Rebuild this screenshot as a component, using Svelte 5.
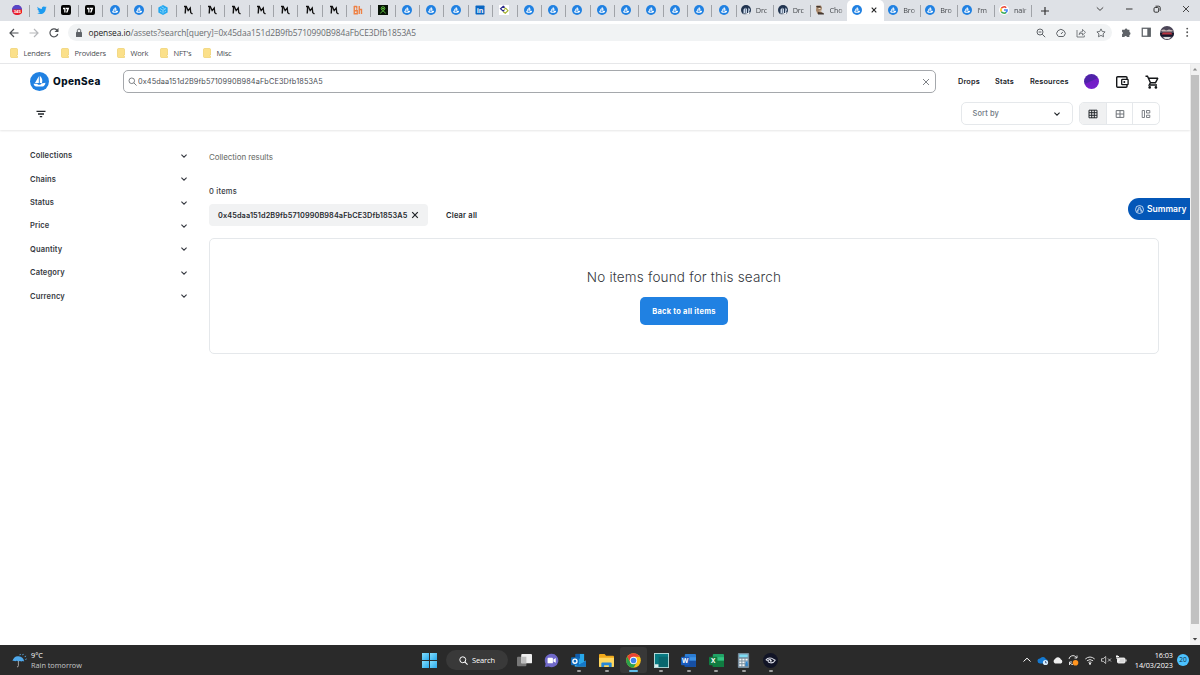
<script>
	let smallTabs = [
		'bus', 'bird', 'tv', 'tv', 'sea', 'sea', 'cube',
		'm', 'm', 'm', 'm', 'm', 'm', 'm', 'bh', 'green',
		'sea', 'sea', 'sea', 'in', 'diamond',
		'sea', 'sea', 'sea', 'sea', 'sea', 'sea', 'sea', 'sea', 'sea'
	];
	let wideTabs = [
		{ icon: 'drop', title: 'Drc' },
		{ icon: 'drop', title: 'Drc' },
		{ icon: 'ape', title: 'Cho' },
		{ icon: 'sea', title: '', active: true },
		{ icon: 'sea', title: 'Bro' },
		{ icon: 'sea', title: 'Bro' },
		{ icon: 'sea', title: "I'm" },
		{ icon: 'google', title: 'nair' }
	];
	let bookmarks = [
		{ name: 'Lenders', width: 51 },
		{ name: 'Providers', width: 56 },
		{ name: 'Work', width: 43 },
		{ name: "NFT's", width: 43 },
		{ name: 'Misc', width: 40 }
	];
	let filters = ['Collections', 'Chains', 'Status', 'Price', 'Quantity', 'Category', 'Currency'];
	let apps = ['tasks', 'chat', 'outlook', 'folder', 'chrome', 'teal', 'word', 'excel', 'calc', 'eye'];
	let address = '0x45daa151d2B9fb5710990B984aFbCE3Dfb1853A5';
	let query = $state(address);
</script>

{#snippet chevron()}
	<svg class="chev" viewBox="0 0 8 8"><path d="M1.4 2.7 4 5.2l2.6-2.5" fill="none" stroke="currentColor" stroke-width="1.1" /></svg>
{/snippet}

{#snippet favicon(name)}
	<svg class="fav" viewBox="0 0 20 20">
		{#if name === 'sea'}
			<circle cx="10" cy="10" r="10" fill="#2081e2" />
			<path d="M9.3 4.5v7H5.2zM10.3 4c2.2 2 3.4 4.600 2.300 7.500h-2.300zM3.800 12.400h4l.6 1h2.500l1-1.200 4.300-.9c0 2-1.500 4-3 4H6.800c-1.700 0-2.800-1.200-3-2.900z" fill="#fff" />
		{:else if name === 'bus'}
			<circle cx="10" cy="10" r="10" fill="#8b3a9c" />
			<path d="M0 10a10 10 0 0 1 20 0z" fill="#5547c8" />
			<path d="M1 9h19v7q-4 4-9 4-8 0-10-7z" fill="#ed1c24" />
			<text x="10.500" y="16.500" text-anchor="middle" font-size="8.500" font-weight="700" fill="#fff">345</text>
		{:else if name === 'bird'}
			<path d="M1 3.500c2.500 2.700 5 4.200 8.700 4.300C9 4 12.800 1.500 16 4l2.700-1-1.300 2.300 2.100-.5-2 2.200C17.500 14 12.500 18 7 18c-2.600 0-4.700-.7-6.500-1.800 2.300.1 4.100-.4 5.600-1.600-1.800-.2-3-1.200-3.500-2.700h1.600C2.200 11.200 1 9.700 1 7.700l1.800.5C1 6.700.4 5 1 3.500z" fill="#1d9bf0" />
		{:else if name === 'tv'}
			<rect width="20" height="20" rx="4" fill="#050505" />
			<path d="M4 5.500h5v9.500H6.500V8.500H4zM10 5.500h6.500L13 15h-3l2.500-6.500H10z" fill="#fff" />
		{:else if name === 'cube'}
			<path d="m10 0 9.300 5v10L10 20 .7 15V5z" fill="#24a7ef" />
			<path d="m4 7 6 3.500L16 7M10 10.500V17M7 3.500l6 3.500M4 12l3 2M16 12l-3 2" fill="none" stroke="#a5e2ff" stroke-width="1.500" />
		{:else if name === 'm'}
			<path d="M2 3h4.500l3.800 8.200L14.500 6l1 9.500 3.500 2.500" fill="none" stroke="#111" stroke-width="2.600" />
			<path d="M4 3h3l-1.200 14H3z" fill="#111" />
		{:else if name === 'bh'}
			<path d="M2.500 2v15.500h6v-6h-6M7.500 2v5M2 3h5.500M12.500 2v16M12.500 9H17v9" fill="none" stroke="#ee8043" stroke-width="2.700" />
			<path d="M7.500 7v4H3" fill="none" stroke="#ee8043" stroke-width="2" />
		{:else if name === 'green'}
			<rect width="20" height="20" fill="#071207" />
			<circle cx="10" cy="7" r="3.600" fill="none" stroke="#65ce42" stroke-width="1.800" />
			<path d="m4.500 16.500 5.500-5 5.500 5M8 7h4" fill="none" stroke="#65ce42" stroke-width="1.800" />
		{:else if name === 'in'}
			<rect x="1" y="1" width="18" height="18" rx="1.500" fill="#0a66c2" />
			<text x="10" y="15.500" text-anchor="middle" font-size="15" font-weight="700" fill="#fff">in</text>
		{:else if name === 'diamond'}
			<rect width="20" height="20" fill="#fff" />
			<path d="m11.500 5-3-2.500-5.500 5 5.500 5 2-2" fill="none" stroke="#2b2a87" stroke-width="2.200" />
			<path d="m10 9 3.500-2.500 4.500 5-5.500 5-4-3" fill="none" stroke="#a4b32c" stroke-width="2.200" />
		{:else if name === 'drop'}
			<circle cx="10" cy="10" r="10" fill="#213450" />
			<path d="M5 17V9l3-3v10M9 16V5l3 3v8M14 15l1-10 3 4-3 8" fill="#cad7e8" />
			<path d="M3 17q7 2 15-3l-3 5q-7 2-12-2z" fill="#fff" />
		{:else if name === 'ape'}
			<path d="M3 1h9l2 5-2 7 6 5H5L2 11z" fill="#a48468" />
			<path d="M2 2h8l3 3H4zM6 14l11 2 1 3H6z" fill="#42362f" />
			<path d="M7 6h4v2H7zM7 12l5-1v2z" fill="#eee3ce" />
		{:else if name === 'google'}
			<circle cx="10" cy="10" r="10" fill="#fff" />
			<g fill="none" stroke-width="3">
				<path d="M4.700 6.800A6.300 6.300 0 0 1 14.500 5.500" stroke="#ea4335" />
				<path d="M4.700 6.800a6.300 6.300 0 0 0 0 6.400" stroke="#fbbc05" />
				<path d="M4.700 13.200a6.300 6.300 0 0 0 9.500 1.600" stroke="#34a853" />
				<path d="M14.200 14.800A6.300 6.300 0 0 0 16.300 10H10" stroke="#4285f4" />
			</g>
		{/if}
	</svg>
{/snippet}

{#snippet app(name)}
	<svg class="app-icon" viewBox="0 0 16 16">
		{#if name === 'tasks'}
			<rect x="0" y="4" width="10" height="10" rx="1" fill="#777" />
			<rect x="4.500" y="1" width="11.500" height="10" rx="1" fill="#eee" />
			<path d="M4.500 4H10v7H5.500q-1 0-1-1z" fill="#bdbdbd" />
		{:else if name === 'chat'}
			<path d="M8 .8a7.200 7.200 0 1 1-3 13.700L1 15l.7-3.500A7.200 7.200 0 0 1 8 .8z" fill="#6f68c8" />
			<rect x="3.800" y="5" width="5.700" height="6" rx="1" fill="#fff" />
			<path d="m10 7 2.500-1.600v5L10 9z" fill="#fff" />
		{:else if name === 'outlook'}
			<path d="M5 1h9v13H5z" fill="#28a8ea" />
			<path d="M5 1h4.500v5H5z" fill="#0f5cad" />
			<path d="m4 8 5.500 3.500L16 8v6.500H4z" fill="#50c5f5" />
			<path d="m4 14.500 12-6.300v6.300z" fill="#1478c8" />
			<rect x="0" y="4.500" width="8.500" height="8.500" rx="1" fill="#0f6cbd" />
			<circle cx="4.200" cy="8.700" r="2.200" fill="none" stroke="#fff" stroke-width="1.400" />
		{:else if name === 'folder'}
			<path d="M0 2q0-1 1-1h5l1.500 2H15q1 0 1 1v6H0z" fill="#f0a91b" />
			<path d="M0 5h16v9q0 1-1 1H1q-1 0-1-1z" fill="#ffd75e" />
			<path d="M2.500 15v-4q0-1 1-1h9q1 0 1 1v4h-3v-2h-5v2z" fill="#2787d8" />
		{:else if name === 'chrome'}
			<circle cx="8" cy="8" r="7.800" fill="#fbc116" />
			<path d="M1.250 4.100A7.800 7.800 0 0 1 14.750 4.100H8L4.600 10z" fill="#ea4335" />
			<path d="M1.250 4.100A7.800 7.800 0 0 0 8 15.800L11.400 10H4.600z" fill="#2aa14b" />
			<circle cx="8" cy="8" r="3.900" fill="#fff" />
			<circle cx="8" cy="8" r="3" fill="#3f83ec" />
		{:else if name === 'teal'}
			<rect x=".5" y=".5" width="15" height="15" fill="#087b83" stroke="#b9dfdf" />
			<path d="M1 12h4v3H1z" fill="#d9eeee" />
			<path d="M5 4h10v11H5z" fill="#08676e" />
		{:else if name === 'word' || name === 'excel'}
			<rect x="4" y="1" width="12" height="14" rx="1" fill={name === 'word' ? '#2b7cd3' : '#21a366'} />
			<path d="M4 8h12v6q0 1-1 1H5q-1 0-1-1z" fill={name === 'word' ? '#164fa3' : '#107c41'} />
			<path d="M4 4.500h12V8H4z" fill={name === 'word' ? '#3e92e5' : '#33c481'} />
			<rect x="0" y="4" width="9" height="9" rx="1" fill={name === 'word' ? '#185abd' : '#107c41'} />
			<text x="4.500" y="11" text-anchor="middle" font-size="7" font-weight="700" fill="#fff">{name === 'word' ? 'W' : 'X'}</text>
		{:else if name === 'calc'}
			<rect x="2" y="0" width="12" height="16" rx="1" fill="#778c9c" />
			<rect x="3.500" y="1.500" width="9" height="3" fill="#7edcf4" />
			<path d="M3.500 7h9M3.500 10h9M3.500 13h6" stroke="#f2f5f7" stroke-width="2" stroke-dasharray="2.300 1" />
			<path d="M10.200 9h2.300v5h-2.300z" fill="#2d86d2" />
		{:else}
			<circle cx="8" cy="8" r="8" fill="#111426" />
			<path d="M3 7.500Q5 4.500 9 5.500l4 2.300q-1.500 3-5 2.700-3-.3-2.500-2.500.8-1.500 3-.8M3 7.500l2.500.5" fill="none" stroke="#d8dae5" stroke-width="1.100" />
			<circle cx="8.300" cy="8.300" r="1.100" fill="#e8e8ef" />
		{/if}
	</svg>
{/snippet}

<div class="screen">
	<div class="tabs">
		{#each smallTabs as tab}
			<div class="tab small">{@render favicon(tab)}</div>
		{/each}
		{#each wideTabs as tab, i}
			<div class="tab wide" class:active={tab.active} class:no-line={i === 2}>
				{@render favicon(tab.icon)}
				{#if tab.active}
					<svg class="close" viewBox="0 0 8 8"><path d="m1.700 1.700 4.600 4.600m0-4.600L1.700 6.300" stroke="#222" stroke-width="1.100" /></svg>
				{:else}
					<span class="tab-title">{tab.title}</span>
				{/if}
			</div>
		{/each}
		<svg class="plus" viewBox="0 0 10 10"><path d="M5 1v8M1 5h8" stroke="#333" stroke-width="1.200" /></svg>
		<div class="window-buttons">
			<svg viewBox="0 0 10 10"><path d="m1.800 3.400 3.200 3 3.200-3" fill="none" stroke="#444" /></svg>
			<svg viewBox="0 0 10 10"><path d="M2 5h6.500" stroke="#333" /></svg>
			<svg viewBox="0 0 10 10"><rect x="2" y="3.500" width="4.700" height="4.700" rx="1.200" fill="none" stroke="#333" /><path d="M3.500 2.200h3.200q1.500 0 1.500 1.500v3.100" fill="none" stroke="#333" /></svg>
			<svg viewBox="0 0 10 10"><path d="m2 2 6 6m0-6L2 8" stroke="#333" stroke-width=".9" /></svg>
		</div>
	</div>

	<div class="toolbar">
		<div class="nav-buttons">
			<svg viewBox="0 0 12 12"><path d="M10.500 6H2m4-4L2 6l4 4" fill="none" stroke="#4c4f53" stroke-width="1.200" /></svg>
			<svg viewBox="0 0 12 12"><path d="M1.500 6H10M6 2l4 4-4 4" fill="none" stroke="#b5b7ba" stroke-width="1.200" /></svg>
			<svg viewBox="0 0 12 12"><path d="M9.800 7A4 4 0 1 1 8.800 3l1 1" fill="none" stroke="#4c4f53" stroke-width="1.200" /><path d="M10.500 1v4h-4z" fill="#4c4f53" /></svg>
		</div>
		<div class="url">
			<svg class="lock" viewBox="0 0 8 10"><rect x="1" y="4" width="6" height="5" rx=".6" fill="#5f6368" /><path d="M2.300 4V2.700a1.700 1.700 0 0 1 3.400 0V4" fill="none" stroke="#5f6368" /></svg>
			<span class="url-text"><b>opensea.io</b>/assets?search[query]={address}</span>
			<div class="url-icons">
				<svg viewBox="0 0 10 10"><circle cx="4" cy="4" r="3" fill="none" stroke="#5f6368" /><path d="m6.200 6.200 3 3M2.600 4h2.800" stroke="#5f6368" /></svg>
				<svg viewBox="0 0 10 10"><path d="M2 8.200a4.200 3.900 0 1 1 6-.1q-.3.400-.8.400H2.800q-.5 0-.8-.3zM5 6l1.800-2" fill="none" stroke="#5f6368" /></svg>
				<svg viewBox="0 0 10 10"><path d="M1 2v7h7.300V7.300M3 6.500q.3-2.800 3.500-3V1.400l3 3-3 2.700V5.200Q4.500 5.200 3 6.500z" fill="none" stroke="#5f6368" stroke-width=".8" /></svg>
				<svg viewBox="0 0 10 10"><path d="m5 .9 1.250 2.600 2.850.4-2.050 2 .5 2.850L5 7.400 2.450 8.750l.5-2.850-2.050-2 2.850-.4z" fill="none" stroke="#5f6368" stroke-width=".9" /></svg>
			</div>
		</div>
		<div class="extensions">
			<svg viewBox="0 0 10 10"><path d="M1 2.500h2.500a1.400 1.400 0 0 1 2.700 0H8v2.300a1.400 1.400 0 0 1 0 2.700v2H5.700a1.300 1.300 0 0 0-2.500 0H1V7a1.300 1.300 0 0 0 0-2.400z" fill="#5f6368" /></svg>
			<svg viewBox="0 0 10 10"><rect x="1.200" y="1.200" width="7.600" height="7.600" fill="none" stroke="#5f6368" stroke-width="1.200" /><path d="M6 1h3v8H6z" fill="#5f6368" /></svg>
			<svg class="face" viewBox="0 0 14 14"><circle cx="7" cy="7" r="7" fill="#4c4658" /><path d="M0 7h14a7 7 0 0 1-1 3.500H1Q0 9 0 7z" fill="#15172a" /><path d="M1 4.500q3-2 5 0l3-1 4 1-1 1H2z" fill="#c7b6b4" /><path d="M3 6.500h8l1.500 2h-11z" fill="#b8323f" /><path d="M3 11h8l-2 2H5z" fill="#ddd" /></svg>
			<svg viewBox="0 0 10 10"><circle cx="4" cy="1.500" r=".9" fill="#555" /><circle cx="4" cy="5" r=".9" fill="#555" /><circle cx="4" cy="8.500" r=".9" fill="#555" /></svg>
		</div>
	</div>

	<div class="bookmarks">
		{#each bookmarks as mark}
			<div class="bookmark" style="width: {mark.width}px">
				<svg viewBox="0 0 8 10"><path d="M.5 1.500q0-1 1-1h5q1 0 1 1V7l-.8.5.8.7v1.300h-6q-1 0-1-1z" fill="#fbe08a" stroke="#ecc95c" stroke-width=".6" /></svg>
				<span>{mark.name}</span>
			</div>
		{/each}
	</div>

	<div class="viewport">
		<div class="page">
			<header>
				<div class="top">
					<div class="logo">{@render favicon('sea')}<span>OpenSea</span></div>
					<div class="search">
						<svg viewBox="0 0 10 10"><circle cx="4.200" cy="4.200" r="3.100" fill="none" stroke="#60656b" stroke-width=".9" /><path d="m6.500 6.500 3 3" stroke="#60656b" stroke-width=".9" /></svg>
						<input bind:value={query} aria-label="Search" />
						<svg class="clear" viewBox="0 0 8 8"><path d="m1 1 6 6m0-6L1 7" stroke="#707479" stroke-width=".9" /></svg>
					</div>
					<nav>
						<span class="drops">Drops</span>
						<span class="stats">Stats</span>
						<span class="resources">Resources</span>
					</nav>
					<div class="avatar"></div>
					<svg class="wallet" viewBox="0 0 14 14"><path d="M12 4V2.700q0-1-1-1H2.700q-1 0-1 1v8.600q0 1 1 1H11q1 0 1-1V10" fill="none" stroke="#121417" stroke-width="1.400" /><rect x="6.700" y="4.300" width="6.400" height="5.400" rx=".7" fill="#fff" stroke="#121417" stroke-width="1.300" /><circle cx="9.300" cy="7" r="1" fill="#121417" /></svg>
					<svg class="cart" viewBox="0 0 14 14"><path d="M.5 1.200h2l3 6.500h5L13 3M3.200 3.200H13M5.500 7.700 4.200 10H12" fill="none" stroke="#121417" stroke-width="1.400" /><circle cx="4.700" cy="12.400" r="1.300" fill="#121417" /><circle cx="10.900" cy="12.400" r="1.300" fill="#121417" /></svg>
				</div>
				<div class="controls">
					<svg class="filter" viewBox="0 0 10 8"><path d="M.5 1.300h9M2 4h6M3.800 6.700h2.400" stroke="#202428" stroke-width="1.300" /></svg>
					<div class="sort"><span>Sort by</span>{@render chevron()}</div>
					<div class="views">
						<div class="view on"><svg viewBox="0 0 10 10"><path d="M1 1.200h8v7.600H1zM1 3.700h8M1 6.300h8M3.700 1v8M6.300 1v8" fill="none" stroke="#25292d" /></svg></div>
						<div class="view"><svg viewBox="0 0 10 10"><path d="M1.200 1.600h7.600v6.800H1.200zM1 5h8M5 1.500v7" fill="none" stroke="#70757a" /></svg></div>
						<div class="view"><svg viewBox="0 0 10 10"><path d="M1.200 1.500h2.300v7H1.200zM5.500 1.500h3.300V4H5.500zM5.500 6.200h3.300v2.300H5.500z" fill="none" stroke="#70757a" stroke-width=".9" /></svg></div>
					</div>
				</div>
			</header>
			<main>
				<aside>
					{#each filters as name}
						<div class="filter-row"><span>{name}</span>{@render chevron()}</div>
					{/each}
				</aside>
				<section>
					<div class="results">Collection results</div>
					<div class="count">0 items</div>
					<div class="chips">
						<div class="chip"><span>{query}</span><svg viewBox="0 0 8 8"><path d="m1.200 1.200 5.600 5.600m0-5.600L1.200 6.800" stroke="#202428" stroke-width="1.200" /></svg></div>
						<span class="clear-all">Clear all</span>
					</div>
					<div class="empty">
						<div class="message">No items found for this search</div>
						<button>Back to all items</button>
					</div>
				</section>
			</main>
			<div class="summary">
				<svg viewBox="0 0 10 10"><circle cx="5" cy="5" r="4.400" fill="none" stroke="#fff" stroke-width=".8" /><path d="m2.300 7.500 2-5h1.400l2 5M3.300 7.600V6L5 4.500 6.700 6v1.600" fill="none" stroke="#fff" stroke-width=".7" /></svg>
				<span>Summary</span>
			</div>
		</div>
		<div class="scrollbar">
			<svg viewBox="0 0 10 10"><path d="m2.800 6.500 2.200-2.500 2.200 2.500z" fill="#8a8a8a" /></svg>
			<div class="thumb"></div>
			<svg viewBox="0 0 10 10"><path d="m2.800 3 2.200 2.500L7.200 3z" fill="#444" /></svg>
		</div>
	</div>

	<div class="taskbar">
		<div class="weather">
			<svg viewBox="0 0 16 16"><path d="M.5 8.500Q2 3 7 3.500q5 .2 6 5.500-1.500-1-3 0-1.500-1-3.200 0-1.500-1.200-3.300-.3-1.500-1-3-.2z" fill="#4fa9ec" /><path d="M6.800 8.500v5q0 1.500-1.500 1.300" fill="none" stroke="#aaa" /><path d="m9 1-.6 1.300M12 1l-.6 1.300M14.500 3l-.6 1.300M15.200 6l-.6 1.300" stroke="#5eb5f3" /></svg>
			<div><div>9°C</div><div class="rain">Rain tomorrow</div></div>
		</div>
		<div class="dock">
			<div class="start"><i></i><i></i><i></i><i></i></div>
			<div class="task-search"><svg viewBox="0 0 10 10"><circle cx="4.200" cy="4.200" r="3.300" fill="none" stroke="#fff" stroke-width="1.100" /><path d="m6.500 6.500 3 3" stroke="#fff" stroke-width="1.200" /></svg><span>Search</span></div>
			{#each apps as name, i}
				<div class="slot" class:open={i > 1} class:focused={name === 'chrome'}>{@render app(name)}</div>
			{/each}
		</div>
		<div class="tray">
			<svg viewBox="0 0 12 12"><path d="m2.500 7.500 3.500-3.300 3.500 3.300" fill="none" stroke="#fff" /></svg>
			<svg viewBox="0 0 12 12"><path d="M3 9.500a2.500 2.500 0 0 1 0-5 3.300 3.300 0 0 1 6 .8 2.200 2.200 0 0 1 .5 4.200z" fill="#1479d1" /><circle cx="8.500" cy="8.500" r="2.600" fill="#d6ebfa" /><path d="M8.500 7v1.800h1.300" fill="none" stroke="#236" stroke-width=".7" /></svg>
			<svg viewBox="0 0 12 12"><path d="M3 9.500a2.500 2.500 0 0 1 0-4.500 3.300 3.300 0 0 1 6 .5 2.200 2.200 0 0 1 0 4z" fill="#eee" /></svg>
			<svg viewBox="0 0 12 12"><path d="M2 5a4 4 0 0 1 7-2l1 1V1.500M10 4H7.500M2.500 11V8H5M2.500 8.500q1 2 3.500 2" fill="none" stroke="#ddd" /><circle cx="8.500" cy="8.700" r="2.800" fill="#ff941f" /></svg>
			<svg class="wifi" viewBox="0 0 12 12"><path d="M1.300 5q4.700-4 9.400 0M2.900 6.800q3.100-2.500 6.200 0M4.500 8.400q1.500-1 3 0" fill="none" stroke="#ddd" /><circle cx="6" cy="9.700" r="1" fill="#fff" /></svg>
			<svg viewBox="0 0 12 12"><path d="M1.500 4.700h1.700l2.500-2.200v7L3.200 7.300H1.500zM8 4.500l3 3m0-3-3 3" fill="none" stroke="#ddd" stroke-width=".8" /></svg>
			<svg viewBox="0 0 12 12"><rect x="2.500" y="4" width="7.500" height="5" rx="1" fill="#d8d8d8" stroke="#fff" stroke-width=".8" /><path d="M11 5.500v2M2 1v4M1 2.500h3M4 5v2H2" fill="none" stroke="#fff" /></svg>
		</div>
		<div class="clock"><div>16:03</div><div>14/03/2023</div></div>
		<div class="badge">20</div>
	</div>
</div>

<style>
	:global(body) {
		margin: 0;
		overflow: hidden;
	}
	.screen {
		width: 1200px;
		height: 675px;
		display: flex;
		flex-direction: column;
		background: #fff;
		font-family: "Open Sans", sans-serif;
		font-size: 7.5px;
		overflow: hidden;
	}
	svg {
		display: block;
		flex: none;
	}

	/* browser */
	.tabs {
		height: 21px;
		display: flex;
		align-items: center;
		padding-left: 6px;
		box-sizing: border-box;
		background: #dee1e6;
	}
	.tab {
		height: 21px;
		display: flex;
		align-items: center;
		box-sizing: border-box;
		flex: none;
		padding-bottom: 1px;
		background: linear-gradient(#a0a3a8, #a0a3a8) right 5px / 1px 12px no-repeat;
	}
	.small {
		width: 24.370px;
		padding-left: 6.200px;
	}
	.wide {
		width: 36.9px;
		padding-left: 4px;
		gap: 5px;
	}
	.active, .no-line {
		background: none;
	}
	.active {
		background: #fff;
		border-radius: 5px 5px 0 0;
		gap: 8px;
		padding-left: 4.500px;
	}
	.fav {
		width: 10px;
		height: 10px;
		font-family: "Liberation Sans", sans-serif;
	}
	.tab-title {
		width: 15px;
		white-space: nowrap;
		font-size: 7.300px;
		letter-spacing: -0.2px;
		color: #45484c;
		mask-image: linear-gradient(90deg, #000 60%, transparent);
	}
	.close {
		width: 8px;
		height: 8px;
	}
	.plus {
		width: 10px;
		height: 10px;
		margin-left: 8px;
	}
	.window-buttons {
		display: flex;
		gap: 18.7px;
		margin: -3px 9px 0 auto;
	}
	.window-buttons svg {
		width: 10px;
	}
	.toolbar {
		height: 23px;
		display: flex;
		align-items: center;
	}
	.nav-buttons {
		display: flex;
		width: 68px;
		gap: 8px;
		padding-left: 8px;
		box-sizing: border-box;
	}
	.nav-buttons svg {
		width: 12px;
	}
	.url {
		width: 1044px;
		height: 17px;
		display: flex;
		align-items: center;
		border-radius: 9px;
		background: #f1f3f4;
		color: #696c70;
		font-size: 8.400px;
	}
	.lock {
		width: 8px;
		margin: 0 5.500px 0 7px;
	}
	.url-text {
		letter-spacing: -0.080px;
	}
	.url-text b {
		font-weight: 400;
		color: #222;
	}
	.url-icons {
		display: flex;
		gap: 10px;
		margin: 0 6px 0 auto;
	}
	.url-icons svg {
		width: 10px;
	}
	.extensions {
		display: flex;
		align-items: center;
		gap: 9px;
		padding-left: 9px;
	}
	.extensions svg {
		width: 10.500px;
	}
	.extensions .face {
		width: 14px;
	}
	.bookmarks {
		height: 20px;
		display: flex;
		align-items: center;
		padding: 0 0 2px 9px;
		box-sizing: border-box;
		border-bottom: 1px solid #e7e8ea;
		color: #4a4d51;
		line-height: 14px;
		letter-spacing: -0.2px;
	}
	.bookmark {
		display: flex;
		align-items: center;
		flex: none;
		gap: 5.500px;
		white-space: nowrap;
	}
	.bookmark svg {
		width: 8px;
		margin-left: 1px;
	}

	/* page */
	.viewport {
		height: 581px;
		display: flex;
		font-family: Inter, "Open Sans", sans-serif;
		color: #353840;
	}
	.page {
		width: 1190px;
		position: relative;
	}
	header {
		height: 66px;
		padding: 6px 30px 0 30px;
		box-sizing: border-box;
		box-shadow: 0 1px 2px rgba(0, 0, 0, 0.1);
	}
	.top {
		height: 23px;
		display: flex;
		align-items: center;
	}
	.logo {
		width: 93px;
		display: flex;
		align-items: center;
		gap: 4px;
		font-size: 10px;
		font-weight: 800;
		color: #04111d;
		letter-spacing: 0.4px;
	}
	.logo .fav {
		width: 19px;
		height: 19px;
	}
	.logo span {
		margin-top: -1px;
	}
	.search {
		width: 813px;
		height: 23px;
		display: flex;
		align-items: center;
		box-sizing: border-box;
		border: 1px solid #a5a8ac;
		border-radius: 5px;
		padding: 0 5px 0 4px;
	}
	.search svg {
		width: 9px;
	}
	.search .clear {
		width: 8px;
	}
	input {
		flex: 1;
		border: 0;
		outline: 0;
		padding: 0;
		background: none;
		font: 400 7.300px Inter, sans-serif;
		color: #4a4e55;
		margin-left: 1px;
		letter-spacing: 0.130px;
	}
	nav {
		width: 126px;
		margin-left: 22px;
		display: flex;
		font-size: 7.300px;
		font-weight: 600;
		letter-spacing: 0.170px;
		color: #202429;
	}
	.drops {
		width: 37px;
	}
	.stats {
		width: 35px;
	}
	.avatar {
		width: 15px;
		height: 15px;
		border-radius: 50%;
		background: linear-gradient(155deg, #4f22a9 0 45%, #731cc5 50%, #7722cf);
	}
	.wallet {
		width: 14px;
		margin-left: 16px;
	}
	.cart {
		width: 14px;
		margin-left: 15.500px;
	}
	.controls {
		height: 23px;
		margin-top: 9px;
		display: flex;
		align-items: center;
	}
	.filter {
		width: 10px;
		margin-left: 6px;
	}
	.sort {
		width: 112px;
		height: 23px;
		display: flex;
		align-items: center;
		justify-content: space-between;
		box-sizing: border-box;
		padding: 0 11px 0 10.500px;
		margin-left: auto;
		border: 1px solid #e5e8eb;
		border-radius: 5px;
		color: #707a83;
		font-weight: 500;
		letter-spacing: 0.1px;
	}
	.sort .chev {
		color: #202428;
	}
	.chev {
		width: 8px;
		height: 8px;
	}
	.views {
		width: 81px;
		height: 23px;
		display: flex;
		box-sizing: border-box;
		margin-left: 6px;
		border: 1px solid #e5e8eb;
		border-radius: 5px;
		overflow: hidden;
	}
	.view {
		flex: 1;
		display: grid;
		place-items: center;
		border-left: 1px solid #e5e8eb;
	}
	.view.on {
		border: 0;
		background: #f0f1f2;
	}
	.view svg {
		width: 10px;
	}
	main {
		display: flex;
		padding-left: 30px;
	}
	aside {
		width: 157.500px;
		padding-top: 14px;
		margin-right: 21.500px;
	}
	.filter-row {
		height: 23.430px;
		display: flex;
		align-items: center;
		justify-content: space-between;
		font-size: 7.500px;
		font-weight: 600;
		letter-spacing: 0.150px;
	}
	section {
		width: 950px;
	}
	.results {
		margin-top: 21px;
		height: 12px;
		line-height: 12px;
		font-size: 8px;
		letter-spacing: -0.080px;
		color: #666a65;
	}
	.count {
		margin-top: 22px;
		height: 12px;
		line-height: 13px;
		font-size: 7.500px;
		font-weight: 500;
		letter-spacing: 0.250px;
	}
	.chips {
		display: flex;
		align-items: center;
		margin-top: 7px;
	}
	.chip {
		width: 219px;
		height: 22px;
		display: flex;
		align-items: center;
		gap: 4px;
		box-sizing: border-box;
		padding-left: 9px;
		border-radius: 4px;
		background: #f1f2f3;
		font-size: 7.300px;
		font-weight: 600;
		letter-spacing: 0.120px;
		color: #25292e;
	}
	.chip svg {
		width: 8px;
	}
	.clear-all {
		margin-left: 18px;
		font-size: 7.500px;
		font-weight: 600;
		letter-spacing: 0.200px;
		color: #25292e;
	}
	.empty {
		height: 116px;
		margin-top: 12px;
		display: flex;
		flex-direction: column;
		align-items: center;
		box-sizing: border-box;
		border: 1px solid #e5e8eb;
		border-radius: 5px;
	}
	.message {
		margin-top: 28px;
		height: 20px;
		line-height: 20px;
		font-size: 13.500px;
		font-weight: 300;
		letter-spacing: 0.180px;
		color: #353840;
	}
	button {
		width: 88px;
		height: 28px;
		margin-top: 10px;
		padding: 0;
		border: 0;
		border-radius: 5px;
		background: #2081e2;
		color: #fff;
		font: 700 7.500px Inter, sans-serif;
		letter-spacing: 0.240px;
	}
	.summary {
		position: absolute;
		right: 0;
		top: 134px;
		width: 62px;
		height: 22px;
		display: flex;
		align-items: center;
		gap: 3px;
		padding-left: 7px;
		box-sizing: border-box;
		border-radius: 12px 0 0 12px;
		background: #0457b8;
		color: #fff;
		font-size: 8.500px;
		font-weight: 600;
	}
	.summary svg {
		width: 9px;
	}
	.scrollbar {
		width: 10px;
		display: flex;
		flex-direction: column;
		justify-content: space-between;
		background: #f1f1f1;
	}
	.scrollbar svg {
		width: 10px;
	}
	.thumb {
		width: 8px;
		height: 549px;
		margin: 0 1px 10px;
		background: #c1c1c1;
	}

	/* taskbar */
	.taskbar {
		height: 30px;
		display: flex;
		align-items: center;
		background: #2a2a2a;
		color: #fff;
	}
	.weather {
		width: 404px;
		display: flex;
		align-items: center;
		gap: 4px;
		padding-left: 12px;
		font-size: 7.300px;
		line-height: 10px;
	}
	.weather svg {
		width: 15px;
	}
	.rain {
		color: #c8c8c8;
	}
	.dock {
		display: flex;
		align-items: center;
	}
	.start {
		width: 15px;
		height: 15px;
		display: grid;
		grid-template-columns: 1fr 1fr;
		gap: 1px;
		margin: 0 9px 0 6px;
	}
	.start i {
		background: linear-gradient(135deg, #82dcfb, #29a9eb);
	}
	.task-search {
		width: 62px;
		height: 20px;
		display: flex;
		align-items: center;
		justify-content: center;
		gap: 4px;
		border-radius: 10px;
		background: #393939;
		margin-right: 2.300px;
		letter-spacing: -0.100px;
	}
	.task-search svg {
		width: 9px;
	}
	.slot {
		width: 27.450px;
		height: 26px;
		display: grid;
		place-items: center;
		position: relative;
	}
	.focused {
		background: #383838;
		border-radius: 3px;
	}
	.app-icon {
		width: 15px;
		height: 15px;
	}
	.open::after {
		content: "";
		position: absolute;
		bottom: 1px;
		left: 12px;
		width: 4px;
		height: 2px;
		border-radius: 1px;
		background: #a0a0a0;
	}
	.focused::after {
		left: 9px;
		width: 9px;
		background: #62bde9;
	}
	.tray {
		display: flex;
		gap: 3.300px;
		margin-left: auto;
	}
	.tray svg {
		width: 12px;
	}
	.tray .wifi {
		margin-left: 2px;
	}
	.clock {
		width: 46px;
		text-align: right;
		font-size: 7.300px;
		line-height: 10px;
		letter-spacing: -0.050px;
	}
	.badge {
		width: 12px;
		height: 12px;
		margin: 0 11px 0 4px;
		border-radius: 50%;
		background: #4cc2ff;
		color: #102c3c;
		font-size: 6.500px;
		line-height: 12px;
		text-align: center;
	}
</style>
